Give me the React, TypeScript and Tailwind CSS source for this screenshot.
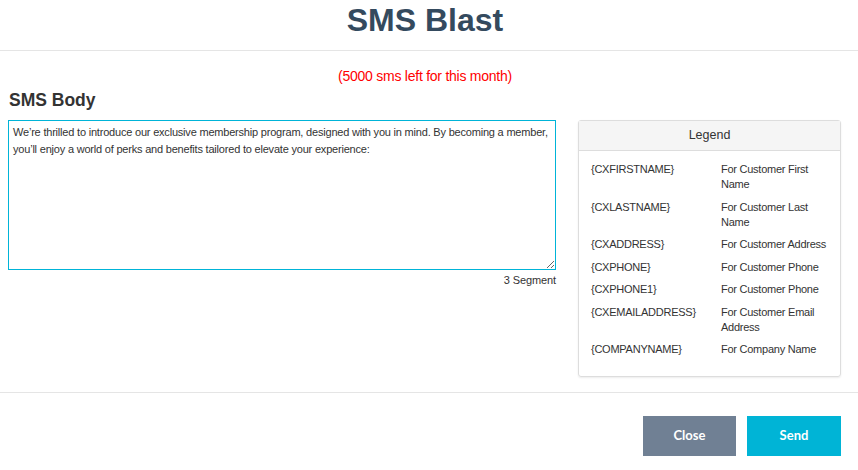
import React from 'react';

const LEGEND: [string, string][] = [
  ['{CXFIRSTNAME}', 'For Customer First Name'],
  ['{CXLASTNAME}', 'For Customer Last Name'],
  ['{CXADDRESS}', 'For Customer Address'],
  ['{CXPHONE}', 'For Customer Phone'],
  ['{CXPHONE1}', 'For Customer Phone'],
  ['{CXEMAILADDRESS}', 'For Customer Email Address'],
  ['{COMPANYNAME}', 'For Company Name'],
];

const BODY =
  'We\u2019re thrilled to introduce our exclusive membership program, designed with you in mind. By becoming a member, you\u2019ll enjoy a world of perks and benefits tailored to elevate your experience:';

export default function App() {
  return (
    <div className="w-[858px] h-[470px] bg-white text-[#333] font-['Liberation_Sans',Arial,sans-serif] overflow-hidden">
      <div className="h-[51px] border-b border-[#e5e5e5] flex justify-center pr-[8px]">
        <h1 className="text-[32px] leading-[42px] font-bold text-[#344a5e] mt-[-1px]">SMS Blast</h1>
      </div>

      <div className="px-[8px]">
        <p className="text-center text-[14px] leading-[20px] tracking-[-0.25px] text-[#ff0000] mt-[15px] pr-[8px]">
          (5000 sms left for this month)
        </p>
        <h2 className="text-[17.5px] leading-[20px] font-bold mt-[4px] ml-[1px]">SMS Body</h2>

        <div className="flex mt-[10px] gap-[22px]">
          <div className="w-[548px]">
            <textarea
              defaultValue={BODY}
              className="block w-full h-[150px] border border-[#00b4d8] px-[4px] py-[3px] text-[11px] leading-[17px] tracking-[-0.2px] text-[#333] outline-none resize-y"
            />
            <p className="text-right text-[11px] leading-[14px] tracking-[-0.1px] mt-[3px]">3 Segment</p>
          </div>

          <div className="w-[263px] h-[257px] border border-[#ddd] rounded-[3px] shadow-[0_1px_2px_rgba(0,0,0,0.08)]">
            <div className="h-[30px] bg-[#f5f5f5] border-b border-[#ddd] flex items-center justify-center text-[12.5px]">
              Legend
            </div>
            <div className="px-[12px] pt-[11px] flex flex-col gap-[7.5px]">
              {LEGEND.map(([k, v]) => (
                <div key={k} className="flex text-[11px] leading-[15px] tracking-[-0.25px]">
                  <span className="w-[130px] shrink-0">{k}</span>
                  <span className="w-[108px]">{v}</span>
                </div>
              ))}
            </div>
          </div>
        </div>
      </div>

      <div className="mt-[15px] border-t border-[#e5e5e5] flex justify-end gap-[11px] pr-[17px] pt-[23px]">
        <button className="w-[93px] h-[40px] bg-[#708094] text-white font-bold text-[13px] font-['Lato',sans-serif]">
          Close
        </button>
        <button className="w-[94px] h-[40px] bg-[#00b4d6] text-white font-bold text-[13px] font-['Lato',sans-serif]">
          Send
        </button>
      </div>
    </div>
  );
}
